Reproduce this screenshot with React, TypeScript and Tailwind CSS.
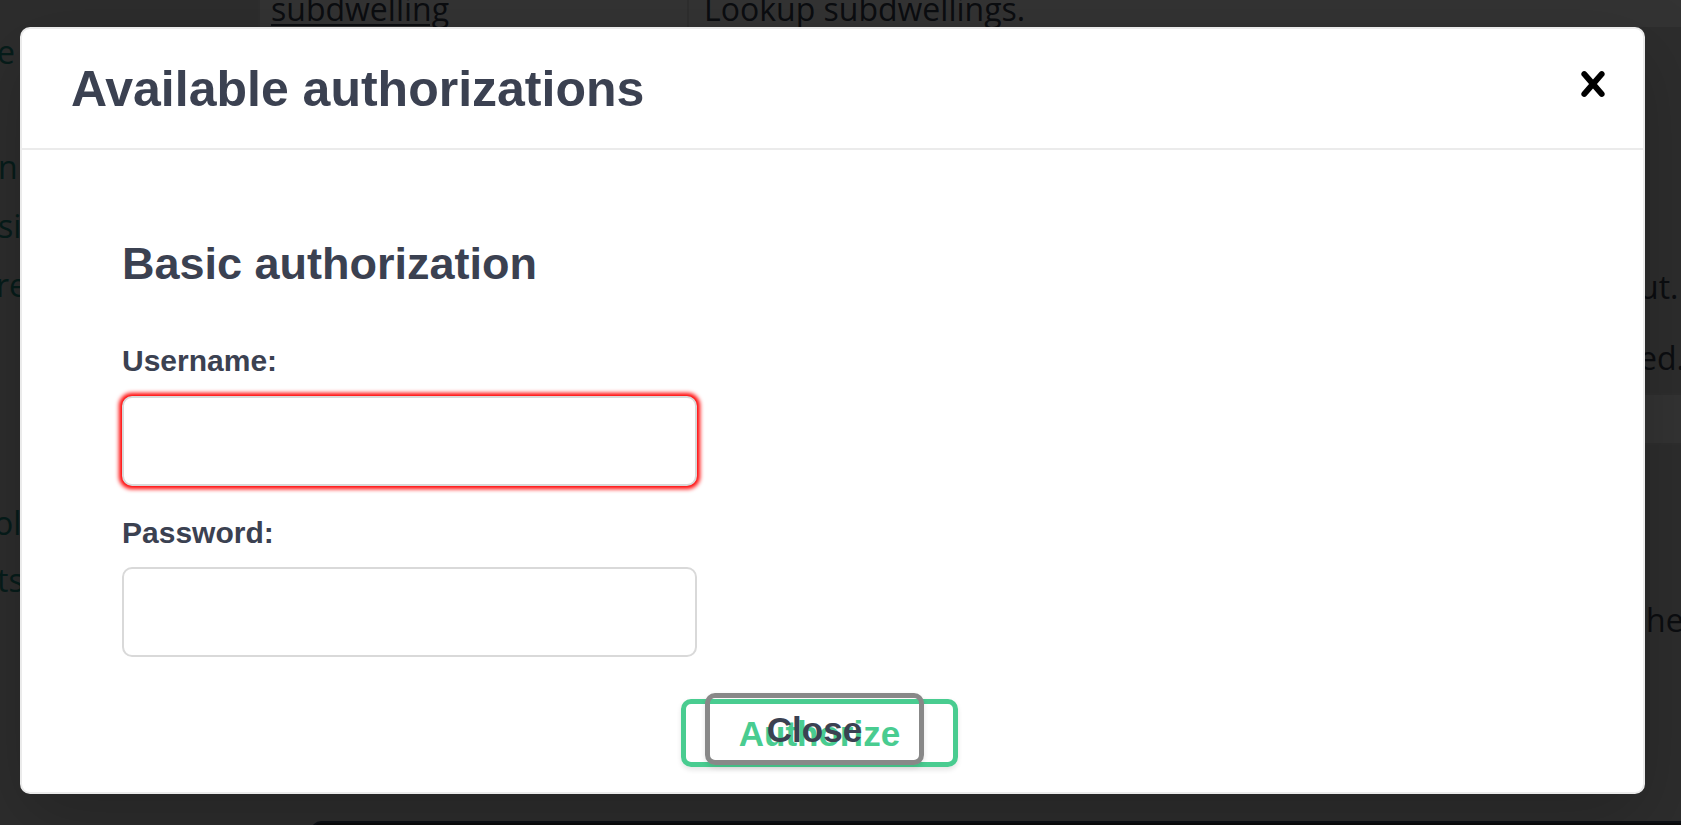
import React from "react"

// the page behind the dialog: only its edges show past the modal
function BackgroundPage() {
    return (
        <div className="flex flex-col w-[1681px] h-[825px] bg-[#dedede] font-['Open_Sans',sans-serif] text-[32px] leading-[40px] text-[#3b4151]">
            {/* table row cut off at the top */}
            <div className="flex h-[27px] shrink-0 overflow-hidden">
                <div className="w-[258px] -mt-[22px]">
                    <span className="-ml-[12px] text-[#3b4151]">r</span>
                </div>
                <div className="w-[429px] bg-white border-l-2 border-[#e4e4e4] pl-[11px] -mt-[11px]">
                    <span className="underline decoration-2 underline-offset-[3px]">subdwelling</span>
                </div>
                <div className="flex-1 bg-white border-l-2 border-[#e4e4e4] pl-[15px] -mt-[11px]">
                    Lookup subdwellings.
                </div>
            </div>

            <div className="flex h-[794px] shrink-0">
                {/* left edge of the description column */}
                <div className="w-[20px] flex flex-col text-[#1e8c80]">
                    <div className="mt-[5px] h-[40px] -ml-[3px]">e</div>
                    <div className="mt-[75px] h-[40px] -ml-[2px]">n</div>
                    <div className="mt-[19px] h-[40px] -ml-[2px]">si</div>
                    <div className="mt-[19px] h-[40px] -ml-[4px]">re</div>
                    <div className="mt-[198px] h-[40px] -ml-[6px]">ol</div>
                    <div className="mt-[17px] h-[40px] -ml-[3px]">ts</div>
                </div>
                <div className="flex-1" />
                {/* right edge */}
                <div className="w-[36px] flex flex-col">
                    <div className="mt-[240px] h-[40px] -ml-[6px] whitespace-nowrap">ut.</div>
                    <div className="mt-[31px] h-[40px] -ml-[6px] whitespace-nowrap">ed.</div>
                    <div className="mt-[15px] h-[52px] bg-white border-y-2 border-[#e4e4e4]" />
                    <div className="mt-[155px] h-[40px] ml-[1px] whitespace-nowrap">he</div>
                </div>
            </div>

            <div className="h-[4px] pl-[311px]">
                <div className="h-[10px] bg-[#333] border-t-2 border-l-2 border-[#41506a] rounded-tl-[10px]" />
            </div>
        </div>
    )
}

function CloseIcon() {
    return (
        <svg width="50" height="50" viewBox="0 0 20 20" aria-hidden="true">
            <path
                fill="#000"
                d="M14.348 14.849c-.469.469-1.229.469-1.697 0L10 11.819l-2.651 3.029c-.469.469-1.229.469-1.697 0-.469-.469-.469-1.229 0-1.697l2.758-3.15-2.759-3.152c-.469-.469-.469-1.228 0-1.697.469-.469 1.228-.469 1.697 0L10 8.183l2.651-3.031c.469-.469 1.228-.469 1.697 0 .469.469.469 1.229 0 1.697l-2.758 3.152 2.758 3.15c.469.469.469 1.229 0 1.698z"
            />
        </svg>
    )
}

function AuthModal() {
    return (
        <div className="w-[1625px] h-[767px] flex flex-col bg-white border-2 border-[#ebebeb] rounded-[10px] shadow-[0_25px_75px_rgba(0,0,0,0.2)] font-['Liberation_Sans',Arial,sans-serif] text-[#3b4151]">
            <div className="h-[121px] shrink-0 flex items-start justify-between border-b-2 border-[#ebebeb] pl-[49px]">
                <h3 className="pt-[35px] text-[50px] leading-[50px] font-bold">Available authorizations</h3>
                <button className="mt-[30px] px-[25px]">
                    <CloseIcon />
                </button>
            </div>

            <div className="flex flex-col pl-[100px] pt-[91px]">
                <h4 className="text-[45px] leading-[45px] font-bold">Basic authorization</h4>

                <label className="mt-[60px] text-[30px] leading-[30px] font-bold">Username:</label>
                <input
                    type="text"
                    className="mt-[20px] w-[575px] h-[90px] bg-white border-2 border-[#d9d9d9] rounded-[10px] shadow-[0_0_4px_2.5px_#ff0000] outline-none"
                />

                <label className="mt-[32px] text-[30px] leading-[30px] font-bold">Password:</label>
                <input
                    type="password"
                    className="mt-[19px] w-[575px] h-[90px] bg-white border-2 border-[#d9d9d9] rounded-[10px] outline-none"
                />

                <div className="mt-[36px] flex items-start">
                    <button className="mt-[6px] ml-[559px] w-[277px] h-[68px] flex items-center justify-center border-[5px] border-[#49cc90] rounded-[10px] text-[#49cc90] text-[35px] leading-none font-bold shadow-[0_2.5px_5px_rgba(0,0,0,0.1)]">
                        Authorize
                    </button>
                    <button className="-ml-[253px] w-[219px] h-[72px] flex items-center justify-center border-[5px] border-[#888888] rounded-[10px] bg-transparent text-[#3b4151] text-[35px] leading-none font-bold shadow-[0_2.5px_5px_rgba(0,0,0,0.1)]">
                        Close
                    </button>
                </div>
            </div>
        </div>
    )
}

export default function App() {
    return (
        <div className="relative w-[1681px] h-[825px] overflow-hidden">
            <BackgroundPage />
            <div className="absolute inset-0 bg-[rgba(0,0,0,0.8)] pl-[20px] pt-[27px]">
                <AuthModal />
            </div>
        </div>
    )
}
